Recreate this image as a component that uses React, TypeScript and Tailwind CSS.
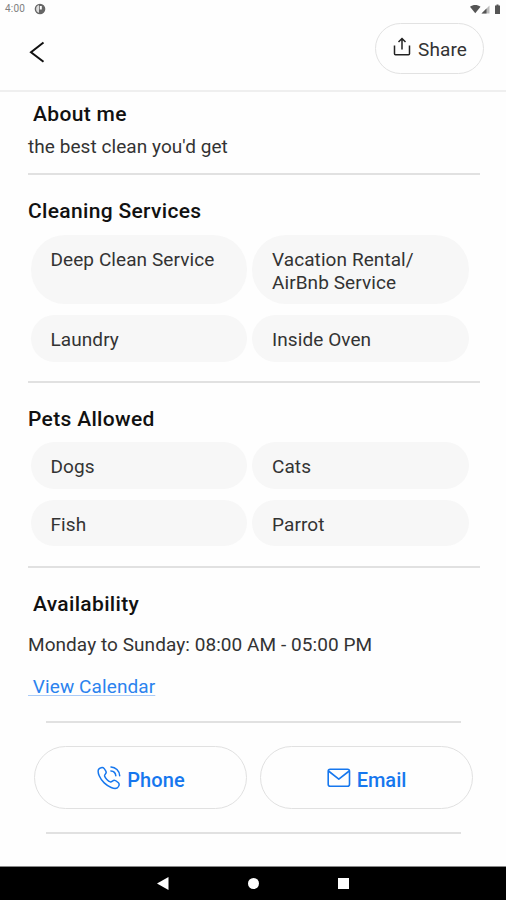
import type { ReactNode } from "react";

function StatusBar() {
  return (
    <div className="flex h-[18px] items-center justify-between pl-[5px] pr-[3px] text-[#666]">
      <div className="flex items-center gap-[8px]">
        <span className="w-[21px] whitespace-nowrap text-[10px] leading-[18px] tracking-[0.2px] text-[#808080]">4:00</span>
        <svg width="12" height="12" viewBox="0 0 12 12">
          <circle cx="6" cy="6" r="5.300" fill="#666" />
          <path d="M2.500 4C3 2.800 4 2.200 5 2.200V9.800C2.500 9.300 1.500 6.500 2.500 4Z" fill="#ddd" />
          <path d="M5.800 3H7.800V6.500H5.800z" fill="#fff" />
        </svg>
      </div>
      <svg width="34" height="12" viewBox="0 0 34 12" fill="#555">
        <path d="M1 3.800C4 1.300 8.500 1.300 11.500 3.800L6.250 10.200Z" />
        <path d="M12.500 10.500L20.500 2.500V10.500Z" fill="#bbb" />
        <path d="M12.500 10.500L17.500 5.500V10.500Z" />
        <path d="M27.500 1.500h2v1h1.500v8.500h-5V2.500h1.500z" />
      </svg>
    </div>
  );
}

function Header() {
  return (
    <header className="flex h-[74px] items-start justify-between border-b-2 border-[#efefef] pl-[28px] pr-[22px] pt-[5px]">
      <svg className="mt-[18px]" width="20" height="24" viewBox="0 0 20 24" fill="none" stroke="#111" strokeWidth="2">
        <path d="M15.500 1.500L3 11.200L15.500 20.700" />
      </svg>
      <button className="flex h-[51px] w-[109px] items-center rounded-full border-[1.500px] border-[#e2e2e2] pl-[17px]">
        <svg className="-mt-[4px]" width="18" height="20" viewBox="0 0 18 20" fill="none" stroke="#222" strokeWidth="1.500">
          <path d="M1.500 8.500V16.800a1 1 0 0 0 1 1H15.500a1 1 0 0 0 1-1V8.500" />
          <path d="M9 12.500V2M5.500 5L9 1.500L12.500 5" />
        </svg>
        <span className="ml-[7px] mt-[2px] text-[19px] leading-6 tracking-[0.1px] text-[#333]">Share</span>
      </button>
    </header>
  );
}

function Title({ children, inset = false }: { children: ReactNode; inset?: boolean }) {
  return (
    <h2 className={`text-[21px] font-medium leading-6 tracking-[0.33px] text-[#111] ${inset ? "pl-[5px]" : ""}`}>{children}</h2>
  );
}

function Divider() {
  return <hr className="h-[2px] w-[452px] border-0 bg-[#e1e1e1]" />;
}

function Chip({ children }: { children: ReactNode }) {
  return (
    <div className="rounded-[34px] bg-[#f7f7f7] px-5 pb-[10px] pt-[14px] text-[19px] leading-[22.500px] tracking-[0.08px] text-[#333]">
      {children}
    </div>
  );
}

function Chips({ children }: { children: ReactNode }) {
  return <div className="ml-[2.500px] grid w-[438px] grid-cols-2 gap-x-[5px] gap-y-[11px]">{children}</div>;
}

function PhoneIcon() {
  return (
    <svg width="24" height="24" viewBox="0 0 24 24" fill="none" stroke="#1677ee" strokeWidth="1.500" strokeLinecap="round" strokeLinejoin="round">
      <path d="M1.500 3.500C2.500 1.800 5.700 .8 7 2.400C8.100 3.900 9.300 5.200 9.200 6.400C9.100 7.900 7.300 8.600 7.600 10C8.100 12.100 11.200 15.300 13.300 15.900C14.800 16.200 15.800 14.300 17.300 14.300C18.500 14.300 20.100 15.600 21.400 16.800C23 18.400 21.700 21 20 22C17.200 23.300 11.500 21 7.200 16.900C2.800 12.600.2 6.600 1.500 3.500Z" />
      <path d="M14 1C18.600 1.100 22.400 4.900 22.700 9.700M13.900 4.900C16.700 5.100 18.600 7 18.800 9.800" />
    </svg>
  );
}

function MailIcon() {
  return (
    <svg width="24" height="20" viewBox="0 0 24 20" fill="none" stroke="#1677ee" strokeWidth="1.600" strokeLinejoin="round">
      <rect x="1.200" y="1.200" width="21.300" height="17" rx="2" />
      <path d="M1.500 3L11.800 11.200L22.200 3" />
    </svg>
  );
}

export default function App() {
  return (
    <div className="flex h-[900px] w-[506px] flex-col overflow-hidden bg-[#fefefe] font-['Roboto',sans-serif]">
      <StatusBar />
      <Header />
      <main className="flex-1 pl-[28px]">
        <section className="h-[81px] pt-[10px]">
          <Title inset>About me</Title>
          <p className="mt-[9px] text-[19px] leading-6 tracking-[0.06px] text-[#333]">the best clean you'd get</p>
        </section>
        <Divider />
        <section className="h-[206px] pt-[24px]">
          <Title>Cleaning Services</Title>
          <div className="mt-[12px]">
            <Chips>
              <Chip>Deep Clean Service</Chip>
              <Chip>Vacation Rental/<br />AirBnb Service</Chip>
              <Chip>Laundry</Chip>
              <Chip>Inside Oven</Chip>
            </Chips>
          </div>
        </section>
        <Divider />
        <section className="h-[183px] pt-[24px]">
          <Title>Pets Allowed</Title>
          <div className="mt-[11px]">
            <Chips>
              <Chip>Dogs</Chip>
              <Chip>Cats</Chip>
              <Chip>Fish</Chip>
              <Chip>Parrot</Chip>
            </Chips>
          </div>
        </section>
        <Divider />
        <section className="h-[153px] pt-[24px]">
          <Title inset>Availability</Title>
          <p className="mt-[17px] text-[19px] leading-6 tracking-[0.06px] text-[#333]">Monday to Sunday: 08:00 AM - 05:00 PM</p>
          <a className="mt-[18px] block whitespace-pre text-[19px] leading-6 tracking-[0.1px] text-[#2b83ee] underline decoration-[#a9cbf8] underline-offset-2">{" View Calendar"}</a>
        </section>
        <div className="ml-[18px] h-[2px] w-[415px] bg-[#e1e1e1]" />
        <div className="ml-[6px] mt-[23px] flex gap-[13px]">
          <button className="flex h-[63px] w-[213px] items-center justify-center gap-[6px] rounded-[32px] border-[1.500px] border-[#e1e1e1] pl-[1px] text-[20px] font-medium text-[#1677ee]">
            <PhoneIcon />
            <span className="pt-[4px] tracking-[0.1px]">Phone</span>
          </button>
          <button className="flex h-[63px] w-[213px] items-center justify-center gap-[6px] rounded-[32px] border-[1.500px] border-[#e1e1e1] text-[20px] font-medium text-[#1677ee]">
            <MailIcon />
            <span className="pt-[4px]">Email</span>
          </button>
        </div>
        <div className="ml-[18px] mt-[23px] h-[2px] w-[415px] bg-[#e1e1e1]" />
      </main>
      <nav className="h-[34px] shrink-0 border-t border-[#888] bg-black">
        <svg width="506" height="33" viewBox="0 0 506 33" fill="#fff">
          <path d="M157 16.500L168.500 10V23Z" />
          <circle cx="253.500" cy="16.500" r="5.500" />
          <rect x="338" y="11" width="11" height="11" />
        </svg>
      </nav>
    </div>
  );
}
